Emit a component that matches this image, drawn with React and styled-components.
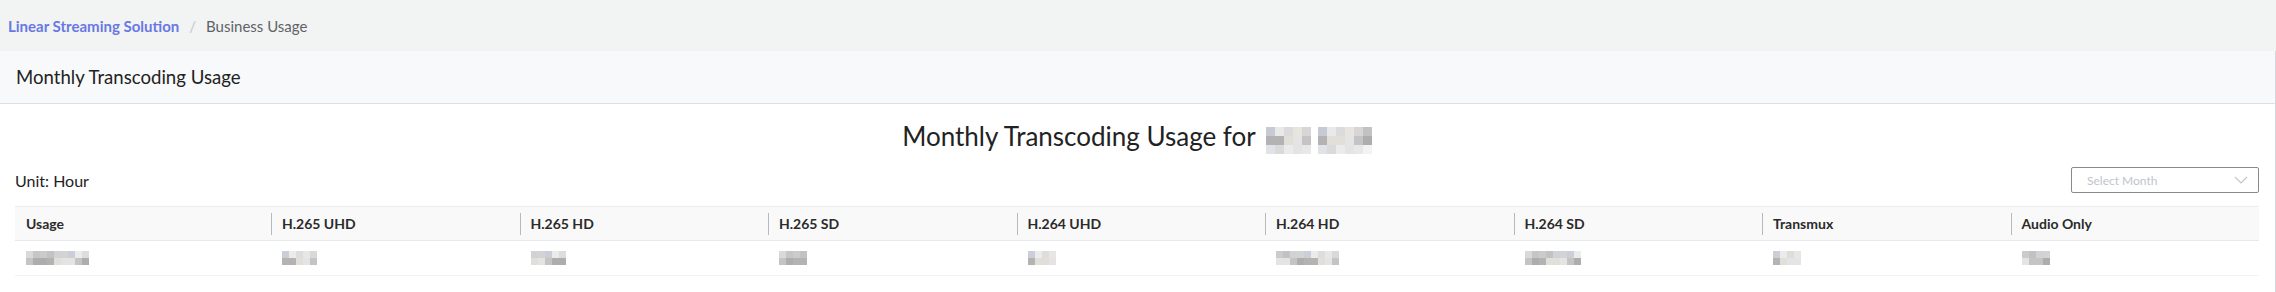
import styled, { createGlobalStyle } from 'styled-components'

const GlobalStyle = createGlobalStyle`
    html, body {
        margin: 0;
        padding: 0;
        background: #ffffff;
        font-family: Lato, "Open Sans", "Liberation Sans", sans-serif;
        color: #222;
    }
`

const columns = ['Usage', 'H.265 UHD', 'H.265 HD', 'H.265 SD', 'H.264 UHD', 'H.264 HD', 'H.264 SD', 'Transmux', 'Audio Only']
const valueWidths = [9, 5, 5, 4, 4, 9, 8, 4, 4]

const greys = ['#d2d2d2', '#c4c4c4', '#b9b9b9', '#e2ded9', '#b8bec8', '#adadad', '#cccccc', '#e4e4e4', '#bfc3ca', '#b3b3b3']

// pseudo random grey so each blurred block looks a bit different
const tone = (seed, i, row) => greys[(seed * 7 + i * 3 + row * 5 + ((i * row + seed) % 4)) % greys.length]

const Pixelated = ({ cols, rows = 2, size = 7, seed = 1, fade = [] }) => (
    <Mosaic $cols={cols} $size={size}>
        {Array.from({ length: cols * rows }).map((_, k) => {
            const row = Math.floor(k / cols)
            const i = k % cols
            return <Pixel key={k} $c={tone(seed, i, row)} $o={fade[row] ?? 1} />
        })}
    </Mosaic>
)

const App = () => {
    return (
        <>
            <GlobalStyle />
            <Page>
                <TopBar>
                    <Crumb href="#">Linear Streaming Solution</Crumb>
                    <Slash>/</Slash>
                    <Current>Business Usage</Current>
                </TopBar>
                <Card>
                    <CardHeader>Monthly Transcoding Usage</CardHeader>
                    <CardBody>
                        <Heading>
                            Monthly Transcoding Usage for
                            <HeadingBlur>
                                <Pixelated cols={5} rows={3} size={9} seed={3} fade={[0.8, 1, 0.45]} />
                                <Pixelated cols={6} rows={3} size={9} seed={6} fade={[0.8, 1, 0.45]} />
                            </HeadingBlur>
                        </Heading>
                        <Toolbar>
                            <Unit>Unit: Hour</Unit>
                            <MonthSelect>
                                <span>Select Month</span>
                                <svg width="14" height="8" viewBox="0 0 14 8" fill="none">
                                    <path d="M1 1l6 6 6-6" stroke="#c0c4cc" strokeWidth="1.2" />
                                </svg>
                            </MonthSelect>
                        </Toolbar>
                        <Table>
                            <HeaderRow>
                                {columns.map((c, i) => (
                                    <HeadCell key={c} $divider={i > 0}>{c}</HeadCell>
                                ))}
                            </HeaderRow>
                            <DataRow>
                                {valueWidths.map((w, i) => (
                                    <DataCell key={i}>
                                        <Pixelated cols={w} seed={i + 2} fade={[0.75, 1]} />
                                    </DataCell>
                                ))}
                            </DataRow>
                        </Table>
                    </CardBody>
                </Card>
            </Page>
        </>
    )
}

const Page = styled.div`
    width: 2276px;
    min-height: 292px;
    background: #ffffff;
`

const TopBar = styled.div`
    height: 51px;
    display: flex;
    align-items: center;
    gap: 10px;
    padding: 0 8px;
    background-color: #f2f3f3;
    font-size: 15px;
`

const Crumb = styled.a`
    color: #6878e4;
    font-weight: 700;
    text-decoration: none;
`

const Slash = styled.span`
    color: #c4c7cc;
`

const Current = styled.span`
    color: #5f6368;
`

const Card = styled.div`
    border-right: 1px solid #d3d6da;
    min-height: 241px;
`

const CardHeader = styled.div`
    height: 52px;
    display: flex;
    align-items: center;
    padding: 0 16px;
    background-color: #f8f9fa;
    border-bottom: 1px solid #dcdfe3;
    font-size: 18.6px;
    color: #222;
`

const CardBody = styled.div`
    padding: 16px 16px 0 15px;
`

const Heading = styled.h2`
    margin: 0;
    height: 32px;
    display: flex;
    justify-content: center;
    align-items: center;
    gap: 10px;
    font-size: 26px;
    font-weight: 400;
    color: #222;
`

const HeadingBlur = styled.span`
    display: inline-flex;
    gap: 7px;
    margin-top: 8px;
`

const Mosaic = styled.span`
    display: inline-grid;
    grid-template-columns: repeat(${p => p.$cols}, ${p => p.$size}px);
    grid-auto-rows: ${p => p.$size}px;
`

const Pixel = styled.span`
    background-color: ${p => p.$c};
    opacity: ${p => p.$o};
`

const Toolbar = styled.div`
    margin-top: 15px;
    height: 26px;
    display: flex;
    justify-content: space-between;
    align-items: center;
`

const Unit = styled.div`
    font-size: 16px;
    color: #222;
`

const MonthSelect = styled.div`
    width: 188px;
    height: 26px;
    box-sizing: border-box;
    display: flex;
    align-items: center;
    justify-content: space-between;
    padding: 0 10px 0 15px;
    border: 1px solid #8a8a8a;
    border-radius: 2px;
    font-size: 12px;
    color: #c0c4cc;
`

const Table = styled.div`
    margin-top: 13px;
`

const HeaderRow = styled.div`
    display: grid;
    grid-template-columns: 256px repeat(8, 1fr);
    height: 35px;
    box-sizing: border-box;
    background-color: #f9f9f9;
    border-top: 1px solid #ededed;
    border-bottom: 1px solid #e6e8eb;
`

const HeadCell = styled.div`
    display: flex;
    align-items: center;
    padding-left: 11px;
    font-size: 14px;
    font-weight: 700;
    color: #2b2b2b;
    position: relative;

    &::before {
        content: '';
        display: ${p => (p.$divider ? 'block' : 'none')};
        position: absolute;
        left: 0;
        top: 6px;
        bottom: 5px;
        width: 1px;
        background-color: #b9b9b9;
    }
`

const DataRow = styled.div`
    display: grid;
    grid-template-columns: 256px repeat(8, 1fr);
    height: 35px;
    box-sizing: border-box;
    border-bottom: 1px solid #f3f3f3;
`

const DataCell = styled.div`
    display: flex;
    align-items: flex-start;
    padding: 10px 0 0 11px;
`

export default App
